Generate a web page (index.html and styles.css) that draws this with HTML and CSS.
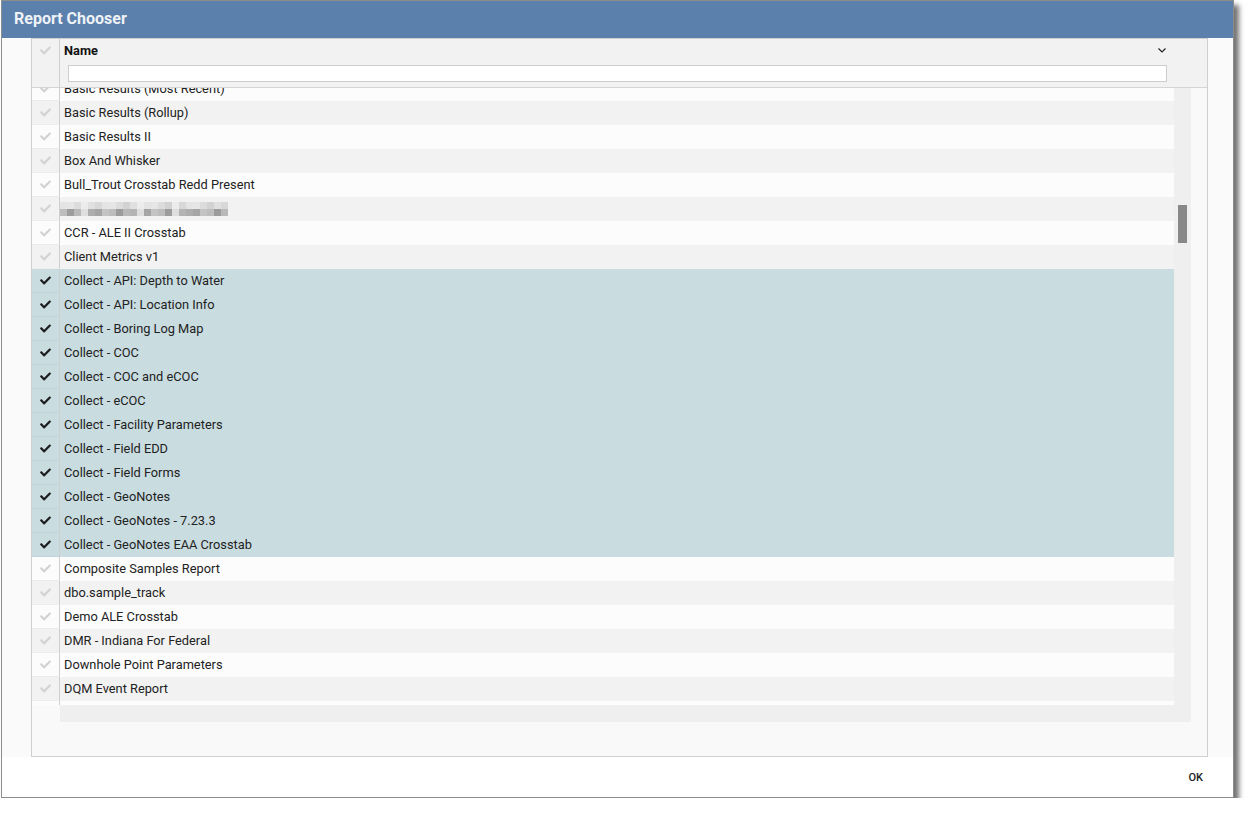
FILE: index.html
```html
<!DOCTYPE html>
<html lang="en">
<head>
  <meta charset="UTF-8">
  <title>Report Chooser</title>
  <link rel="stylesheet" href="styles.css">
</head>
<body>

<!-- Dialog -->
<div class="dialog">
  <div class="dialog-title">Report Chooser</div>

  <div class="dialog-body">
    <div class="grid">

      <!-- Header -->
      <div class="grid-header">
        <div class="check-cell head-check">
          <svg class="check" viewBox="0 0 512 512"><path d="M173.9 439.4l-166.4-166.4c-10-10-10-26.2 0-36.2l36.2-36.2c10-10 26.2-10 36.2 0L192 312.7 432.1 72.6c10-10 26.2-10 36.2 0l36.2 36.2c10 10 10 26.2 0 36.2l-294.4 294.4c-10 10-26.2 10-36.2 0z"/></svg>
        </div>
        <div class="name-head">
          <div class="name-title">
            <span>Name</span>
            <svg class="chevron" viewBox="0 0 8 5"><polyline points="0.5,0.5 4,4 7.5,0.5"/></svg>
          </div>
          <input type="text" class="filter-input">
        </div>
      </div>

      <!-- Rows -->
      <div class="grid-view">
        <div class="row-area">
          <div class="row-list" id="row-list"></div>
        </div>
        <div class="vscroll"><div class="vthumb"></div></div>
        <div class="view-fill"></div>
      </div>

      <div class="hscroll-line">
        <div class="hscroll-spacer"></div>
        <div class="hscroll"></div>
      </div>
      <div class="grid-fill"></div>
    </div>
  </div>

  <div class="dialog-footer">
    <button class="ok-button">OK</button>
  </div>
</div>

<script>
  const reports = [
    ["Basic Results (Most Recent)", false],
    ["Basic Results (Rollup)", false],
    ["Basic Results II", false],
    ["Box And Whisker", false],
    ["Bull_Trout Crosstab Redd Present", false],
    ["", false, true],
    ["CCR - ALE II Crosstab", false],
    ["Client Metrics v1", false],
    ["Collect - API: Depth to Water", true],
    ["Collect - API: Location Info", true],
    ["Collect - Boring Log Map", true],
    ["Collect - COC", true],
    ["Collect - COC and eCOC", true],
    ["Collect - eCOC", true],
    ["Collect - Facility Parameters", true],
    ["Collect - Field EDD", true],
    ["Collect - Field Forms", true],
    ["Collect - GeoNotes", true],
    ["Collect - GeoNotes - 7.23.3", true],
    ["Collect - GeoNotes EAA Crosstab", true],
    ["Composite Samples Report", false],
    ["dbo.sample_track", false],
    ["Demo ALE Crosstab", false],
    ["DMR - Indiana For Federal", false],
    ["Downhole Point Parameters", false],
    ["DQM Event Report", false],
    ["", false]
  ];

  const checkPath = "M173.9 439.4l-166.4-166.4c-10-10-10-26.2 0-36.2l36.2-36.2c10-10 26.2-10 36.2 0L192 312.7 432.1 72.6c10-10 26.2-10 36.2 0l36.2 36.2c10 10 10 26.2 0 36.2l-294.4 294.4c-10 10-26.2 10-36.2 0z";
  const topShades = ["#e4e4e4", "#d8d8d8", "#e0e0e0", "#d2d2d2", "#dcdcdc", "#e6e6e6"];
  const lowShades = ["#bdbdbd", "#a5a5a5", "#b4b4b4", "#9c9c9c", "#c4c4c4", "#adadad", "#b9b9b9"];

  const list = document.getElementById("row-list");
  reports.forEach(function (report, i) {
    const row = document.createElement("div");
    row.className = "grid-row" + (i % 2 === 1 ? " alt" : "") + (report[1] ? " selected" : "");

    const check = document.createElement("div");
    check.className = "check-cell";
    check.innerHTML = '<svg class="check" viewBox="0 0 512 512"><path d="' + checkPath + '"/></svg>';

    const name = document.createElement("div");
    name.className = "name-cell";
    if (report[2]) {
      // Hidden report name, shown pixelated
      const blur = document.createElement("div");
      blur.className = "blurred";
      for (let b = 0; b < 48; b++) {
        const block = document.createElement("span");
        const col = b % 24;
        const gap = (col === 3 || col === 11 || col === 16);
        if (b < 24) {
          block.style.background = gap ? "#ececec" : topShades[(col * 5) % topShades.length];
        } else {
          block.style.background = gap ? "#dedede" : lowShades[(col * 3) % lowShades.length];
        }
        blur.appendChild(block);
      }
      name.appendChild(blur);
    } else {
      name.textContent = report[0];
    }

    row.appendChild(check);
    row.appendChild(name);
    list.appendChild(row);
  });
</script>

</body>
</html>
```

FILE: styles.css
```css
body {
  margin: 0;
  padding: 0;
  background-color: #fff;
  font-family: Roboto, "Liberation Sans", Arial, sans-serif;
  font-size: 12.8px;
  color: #222;
}

.dialog {
  box-sizing: border-box;
  width: 1233px;
  height: 798px;
  margin-left: 1px;
  border: 1px solid #8c8c8c;
  background-color: #fff;
  box-shadow: 5px 5px 5px rgba(0, 0, 0, 0.55);
  display: flex;
  flex-direction: column;
}

.dialog-title {
  height: 37px;
  flex: none;
  background-color: #5b80ab;
  color: #eef2f7;
  font-size: 16px;
  font-weight: bold;
  line-height: 35px;
  padding-left: 12px;
}

.dialog-body {
  height: 719px;
  flex: none;
  padding: 0 25px 0 29px;
  background-color: #fafafa;
}

.grid {
  box-sizing: border-box;
  height: 100%;
  border: 1px solid #cfcfcf;
  display: flex;
  flex-direction: column;
  background-color: #f9f9f9;
}

.grid-header {
  height: 48px;
  flex: none;
  display: flex;
  background-color: #f2f2f2;
  border-bottom: 1px solid #d4d4d4;
}

.check-cell {
  box-sizing: border-box;
  width: 28px;
  flex: none;
  border-right: 1px solid #cfcfcf;
  display: flex;
  align-items: center;
  justify-content: center;
}

.head-check {
  align-items: flex-start;
  padding-top: 6px;
}

.check {
  width: 11px;
  height: 11px;
  fill: #d2d2d2;
}

.name-head {
  flex: 1;
  padding: 0 40px 0 8px;
}

.name-title {
  height: 23px;
  display: flex;
  align-items: center;
  justify-content: space-between;
  margin-left: -4px;
  font-weight: bold;
  color: #111;
}

.chevron {
  width: 8px;
  height: 5px;
  margin: 0 1px 1px 0;
  fill: none;
  stroke: #222;
  stroke-width: 1.2;
}

.filter-input {
  box-sizing: border-box;
  display: block;
  width: 100%;
  height: 17px;
  margin: 3px 0 0 0;
  padding: 0 4px;
  border: 1px solid #cdcdcd;
  background-color: #fff;
  outline: none;
}

.grid-view {
  height: 617px;
  flex: none;
  display: flex;
}

.row-area {
  flex: 1;
  overflow: hidden;
  background-color: #fcfcfc;
}

.row-list {
  margin-top: -11px;
}

.grid-row {
  height: 24px;
  display: flex;
  background-color: #fcfcfc;
}

.grid-row .check-cell {
  border-bottom: 1px solid #ececec;
}

.grid-row.alt {
  background-color: #f2f2f2;
}

.grid-row.selected {
  background-color: #c9dce0;
}

.grid-row.selected .check-cell {
  border-bottom-color: #c0d3d7;
}

.grid-row.selected .check {
  fill: #1b1b1b;
}

.name-cell {
  flex: 1;
  padding-left: 4px;
  line-height: 24px;
  white-space: nowrap;
  overflow: hidden;
}

.blurred {
  display: grid;
  grid-template-columns: repeat(24, 7px);
  grid-auto-rows: 7px;
  width: 168px;
  margin: 5px 0 0 -4px;
  filter: blur(0.6px);
}

.vscroll {
  width: 17px;
  flex: none;
  background-color: #efefef;
  position: relative;
}

.vthumb {
  position: absolute;
  left: 4px;
  top: 117px;
  width: 9px;
  height: 38px;
  background-color: #888;
}

.view-fill {
  width: 16px;
  flex: none;
}

.hscroll-line {
  height: 17px;
  flex: none;
  display: flex;
}

.hscroll-spacer {
  width: 28px;
  flex: none;
}

.hscroll {
  width: 1131px;
  flex: none;
  background-color: #efefef;
}

.grid-fill {
  flex: 1;
}

.dialog-footer {
  flex: 1;
  display: flex;
  justify-content: flex-end;
  align-items: center;
  padding-right: 22px;
}

.ok-button {
  border: none;
  background: none;
  font-family: Roboto, "Liberation Sans", Arial, sans-serif;
  font-size: 11px;
  font-weight: 500;
  color: #222;
  padding: 5px 8px 4px;
  cursor: pointer;
}
```
